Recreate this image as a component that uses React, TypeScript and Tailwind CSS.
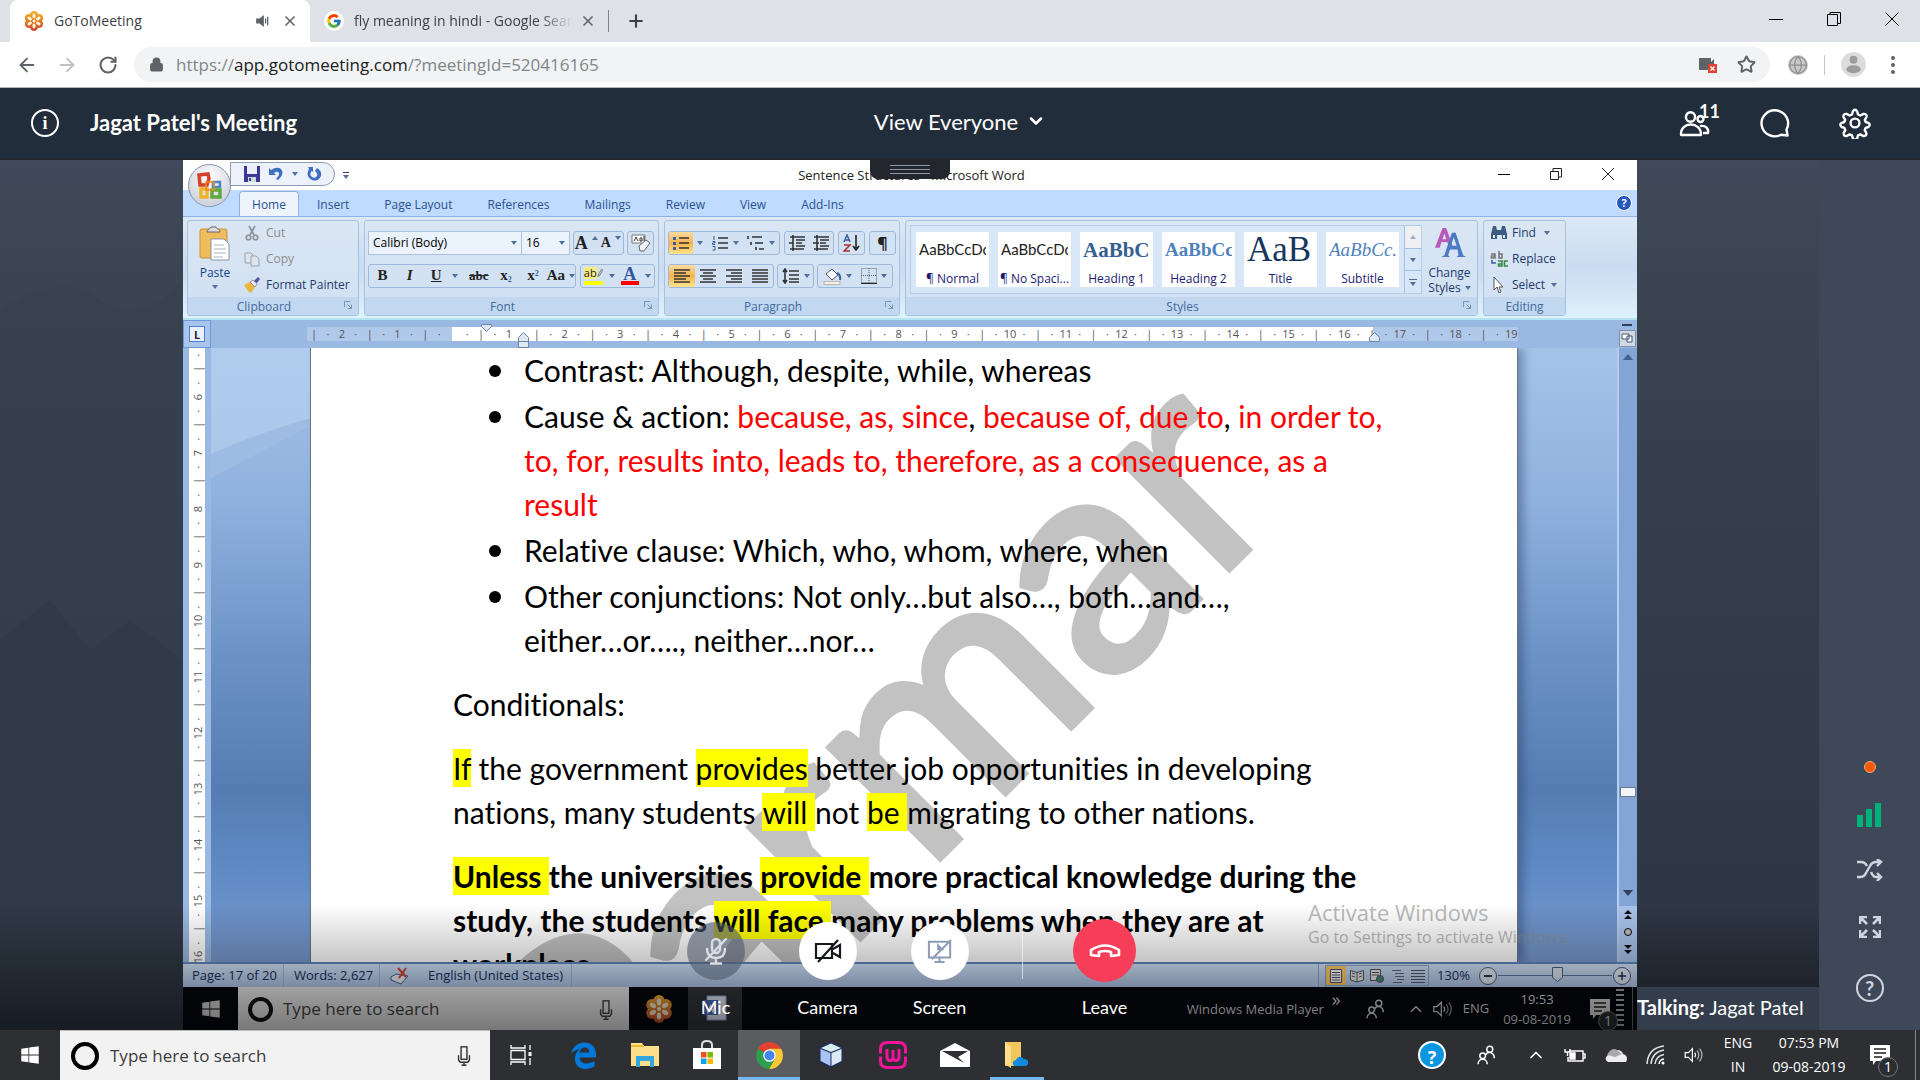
import React from "react";
import { ArrowLeft, ArrowRight, RotateCw, Lock, Star, X, Plus, ChevronDown, ChevronUp, Globe, Wifi } from "lucide-react";
import { FcGoogle } from "react-icons/fc";
import { FaWindows } from "react-icons/fa";

type Kids = { children?: React.ReactNode };

function Caret({ className = "" }: { className?: string }) {
  return (
    <svg viewBox="0 0 6 4" className={`h-1 w-1.5 shrink-0 ${className}`} aria-hidden="true">
      <path d="M0 0h6L3 4z" fill="#4f6f9f" />
    </svg>
  );
}

function Daisy({ className = "" }: { className?: string }) {
  const petals = [0, 60, 120, 180, 240, 300];
  return (
    <svg viewBox="0 0 24 24" className={className} aria-hidden="true">
      <defs>
        <linearGradient id="daisy" gradientUnits="userSpaceOnUse" x1="0" y1="0" x2="0" y2="24">
          <stop offset="0" stopColor="#f7b52c" />
          <stop offset="1" stopColor="#c8452f" />
        </linearGradient>
      </defs>
      <g fill="url(#daisy)">
        <circle cx="12" cy="5" r="5" />
        <circle cx="12" cy="19" r="5" />
        <circle cx="6" cy="8.500" r="5" />
        <circle cx="18" cy="8.500" r="5" />
        <circle cx="6" cy="15.500" r="5" />
        <circle cx="18" cy="15.500" r="5" />
        <circle cx="12" cy="12" r="7" />
      </g>
      <g fill="#fff3d6">
        {petals.map((a) => (
          <ellipse key={a} cx="12" cy="6" rx="1.900" ry="2.900" transform={`rotate(${a} 12 12)`} />
        ))}
        <circle cx="12" cy="12" r="1.800" />
      </g>
    </svg>
  );
}

function People({ className = "" }: { className?: string }) {
  return (
    <svg viewBox="0 0 24 24" className={className} fill="none" stroke="currentColor" strokeWidth="1.800" aria-hidden="true">
      <circle cx="16.500" cy="5" r="3.600" />
      <path d="M11.500 12c2-5 10.500-4 10.500 4" />
      <circle cx="8" cy="13" r="3.400" />
      <path d="M2.500 23c0-8 11-8 11 0" />
    </svg>
  );
}

function MicOutline({ className = "" }: { className?: string }) {
  return (
    <svg viewBox="0 0 16 24" className={className} fill="none" stroke="currentColor" strokeWidth="1.700" aria-hidden="true">
      <rect x="4.500" y="1" width="7" height="15" />
      <path d="M1.500 11v6l2 2.500h9l2-2.500v-6M8 19.500V23M5 23h6" />
    </svg>
  );
}

function Speaker({ className = "" }: { className?: string }) {
  return (
    <svg viewBox="0 0 24 20" className={className} fill="none" stroke="currentColor" strokeWidth="1.500" aria-hidden="true">
      <path d="M1 7h4l5-5v16l-5-5H1z" />
      <path d="M13 7q2 3 0 6" />
      <path d="M16 4.500q4 5.500 0 11M19 2q6 8 0 16" opacity=".65" />
    </svg>
  );
}

function Notice({ className = "" }: { className?: string }) {
  return (
    <span className={`relative block ${className}`}>
      <svg viewBox="0 0 20 20" className="h-5 w-5" aria-hidden="true">
        <path d="M0 0h20v16H6l-3 4v-4H0z" fill="currentColor" />
        <path d="M4 4h12M4 8h12M4 12h8" stroke="#222" strokeWidth="1.500" />
      </svg>
      <span className="absolute -right-2 -bottom-3 grid h-5 w-5 place-items-center rounded-full border border-[#777] bg-[#2b2d31] text-sm leading-none">1</span>
    </span>
  );
}

/* ---------- Browser ---------- */

function BrowserChrome() {
  return (
    <div className="shrink-0 bg-white">
      <div className="flex h-[42px] items-stretch bg-[#dee1e6] pl-2.5 text-sm text-[#3c4043]">
        <div className="flex w-[300px] items-center rounded-t-lg bg-white pr-3 pl-3.5">
          <Daisy className="h-5 w-5" />
          <span className="ml-2.5 flex-1">GoToMeeting</span>
          <svg viewBox="0 0 16 14" className="mr-3 h-3 w-3.5" aria-hidden="true">
            <path d="M0 4h4l5-4v14l-5-4H0z" fill="#5f6368" />
            <path d="M11 4v6M13.500 2v10" stroke="#5f6368" strokeWidth="1.500" />
          </svg>
          <button aria-label="Close tab"><X className="h-4 w-4 text-[#5f6368]" strokeWidth={2.500} /></button>
        </div>
        <div className="flex w-[298px] items-center pr-3 pl-3.5">
          <span className="grid h-5 w-5 shrink-0 place-items-center rounded-full bg-white"><FcGoogle className="h-4 w-4" /></span>
          <span className="ml-2.5 flex-1 overflow-hidden [mask-image:linear-gradient(to_right,black_85%,transparent)] whitespace-nowrap">fly meaning in hindi - Google Search</span>
          <button aria-label="Close tab" className="ml-2"><X className="h-4 w-4 text-[#5f6368]" strokeWidth={2.500} /></button>
        </div>
        <span className="my-2.5 w-px bg-[#80868b]" />
        <button aria-label="New tab" className="ml-[17px]"><Plus className="h-5 w-5 text-[#3c4043]" strokeWidth={2.500} /></button>
        <div className="ml-auto flex items-center gap-11 pr-[21px] pb-1 text-black">
          <button aria-label="Minimize"><span className="block h-px w-3.5 bg-black" /></button>
          <button aria-label="Restore">
            <svg viewBox="0 0 14 14" className="h-3.5 w-3.5" fill="none" stroke="#000"><path d="M.5 2.500h10v11H.5zM3 2.500V.5h10.500v11H11" /></svg>
          </button>
          <button aria-label="Close">
            <svg viewBox="0 0 14 14" className="h-3.5 w-3.5" stroke="#000"><path d="M.5.5l13 13M13.500.5l-13 13" /></svg>
          </button>
        </div>
      </div>
      <div className="flex h-[46px] items-center border-b border-[#b4b5b8] pl-4">
        <button aria-label="Back"><ArrowLeft className="h-[22px] w-[22px] text-[#5f6368]" /></button>
        <button aria-label="Forward" className="ml-[18px]"><ArrowRight className="h-[22px] w-[22px] text-[#bdc1c6]" /></button>
        <button aria-label="Reload" className="ml-5"><RotateCw className="h-5 w-5 text-[#5f6368]" strokeWidth={2.500} /></button>
        <div className="ml-4 flex h-[35px] flex-1 items-center rounded-full bg-[#f1f3f4] pr-3.5 pl-[15px]">
          <Lock className="h-[15px] w-[15px] text-[#5f6368]" fill="#5f6368" strokeWidth={2.500} />
          <span className="ml-3 flex-1 text-[17px] text-[#80868b]">
            https://<span className="text-[#202124]">app.gotomeeting.com</span>/?meetingId=520416165
          </span>
          <svg viewBox="0 0 18 16" className="mr-5 h-4 w-[18px]" aria-hidden="true">
            <path d="M0 1h12v4l3-3v5H9v6H0z" fill="#5f6368" />
            <path d="M9 7h9v9H9z" fill="#db4437" />
            <path d="M11.500 9.500l4 4M15.500 9.500l-4 4" stroke="#fff" strokeWidth="1.300" />
          </svg>
          <button aria-label="Bookmark this page"><Star className="h-[19px] w-[19px] text-[#5f6368]" strokeWidth={2.500} /></button>
        </div>
        <Globe className="ml-[18px] h-5 w-5 rounded-full bg-[#c9c9c9] text-[#8f8f8f]" strokeWidth={1.500} />
        <span className="ml-4 h-5 w-px bg-[#c4c6c9]" />
        <button aria-label="Profile" className="ml-4">
          <svg viewBox="0 0 24 24" className="h-[25px] w-[25px]"><circle cx="12" cy="12" r="12" fill="#dcdcdc" /><circle cx="12" cy="7.500" r="3.800" fill="#9c9c9c" /><ellipse cx="12" cy="16.500" rx="7" ry="3.800" fill="#9c9c9c" /></svg>
        </button>
        <button aria-label="Menu" className="mr-[25px] ml-[25px] flex flex-col gap-[3px]">
          <span className="h-1 w-1 rounded-full bg-[#5f6368]" />
          <span className="h-1 w-1 rounded-full bg-[#5f6368]" />
          <span className="h-1 w-1 rounded-full bg-[#5f6368]" />
        </button>
      </div>
    </div>
  );
}

function MeetingHeader() {
  return (
    <header className="grid h-[72px] shrink-0 grid-cols-[1fr_auto_1fr] items-center border-b-2 border-[#24262c] bg-[#222d3b] font-['Lato',sans-serif] text-white">
      <div className="flex items-center pl-[31px]">
        <button aria-label="Meeting info" className="grid h-7 w-7 place-items-center rounded-full border-2 border-white font-['Liberation_Serif',serif] text-lg leading-none font-bold">i</button>
        <h1 className="ml-[31px] pb-0.5 text-[22px] font-bold">Jagat Patel's Meeting</h1>
      </div>
      <button className="flex items-center gap-2 pb-1 text-[22px]">
        View Everyone <ChevronDown className="h-5 w-5" strokeWidth={3} />
      </button>
      <div className="flex items-center justify-end pr-[49px]">
        <button aria-label="Attendees" className="relative">
          <svg viewBox="0 0 32 30" className="h-[30px] w-8" fill="none" stroke="#fff" strokeWidth="2.400" strokeLinejoin="round">
            <ellipse cx="11.500" cy="9" rx="4.600" ry="4.800" />
            <path d="M2 27c-1-14 20.500-14 20 0z" />
            <circle cx="21.500" cy="11" r="3" />
            <path d="M21 18c6-1 9 3 8 7h-5" />
          </svg>
          <span className="absolute -top-1.5 left-5 text-lg leading-none font-bold">11</span>
        </button>
        <button aria-label="Chat" className="ml-12">
          <svg viewBox="0 0 32 30" className="h-[30px] w-8" fill="none" stroke="#fff" strokeWidth="2.400" strokeLinejoin="round">
            <path d="M27.500 21.500A13.300 13 0 1 0 22 26.800l6.500.7z" />
          </svg>
        </button>
        <button aria-label="Settings" className="ml-12">
          <svg viewBox="0 0 32 32" className="h-8 w-8" fill="none" stroke="#fff" strokeWidth="2.400" strokeLinejoin="round">
            <circle cx="16" cy="16" r="4.400" />
            <path d="M13.800 4.500q2.200-3.500 4.400 0l.8 3 2.400 1 3-1.600q3.600-.4 3.100 3.100l-1.700 2.800.9 2.200 2.600.8q2.800 1.700 0 4.200l-2.700.9-.9 2.300 1.600 2.700q.3 3.500-3.100 3.100l-2.800-1.600-2.400 1-.8 2.800q-2.200 3-4.400 0l-.8-2.800-2.400-1-2.800 1.600q-3.400.4-3.100-3.100l1.600-2.700-.9-2.300-2.700-.9q-2.800-2.500 0-4.200l2.600-.8.9-2.200-1.700-2.800q-.5-3.500 3.100-3.100l3 1.600 2.400-1z" />
          </svg>
        </button>
      </div>
    </header>
  );
}

/* ---------- Word ribbon ---------- */

function Group({ label, launcher = true, className = "", children }: Kids & { label: string; launcher?: boolean; className?: string }) {
  return (
    <section className={`flex flex-col overflow-hidden rounded-[3px] border border-[#a8c2de] bg-gradient-to-b from-[#dbe6f3] to-[#cfe0f3] ${className}`}>
      <div className="flex min-h-0 flex-1">{children}</div>
      <div className="flex h-[18px] shrink-0 items-center justify-center bg-[#c1d8f0] pt-0.5 text-[#44699f]">
        <span className="flex-1 text-center">{label}</span>
        {launcher && (
          <svg viewBox="0 0 9 9" className="mr-1.5 mb-1 ml-1 h-2 w-2 shrink-0" fill="none" stroke="#6b88ad" aria-hidden="true">
            <path d="M.5 7V.5H7M4 4l4 4M8.500 4v4.500H4" />
          </svg>
        )}
      </div>
    </section>
  );
}

function Box({ className = "", children }: Kids & { className?: string }) {
  return <div className={`flex h-6 items-stretch overflow-hidden rounded-[3px] border border-[#9db8dd] bg-[#d3e2f3] ${className}`}>{children}</div>;
}

function Tool({ label, on = false, className = "", children }: Kids & { label: string; on?: boolean; className?: string }) {
  return (
    <button aria-label={label} className={`flex flex-1 items-center justify-center gap-1 text-[#222] ${on ? "bg-gradient-to-b from-[#fbdc9e] via-[#f9b24c] to-[#fde48c]" : ""} ${className}`}>
      {children}
    </button>
  );
}

function Lines({ d, className = "w-[18px]" }: { d: string; className?: string }) {
  return (
    <svg viewBox="0 0 18 16" className={`h-4 ${className}`} fill="none" stroke="#333" strokeWidth="1.600" aria-hidden="true">
      <path d={d} />
    </svg>
  );
}

function Dots({ nums = false }: { nums?: boolean }) {
  return (
    <svg viewBox="0 0 18 16" className="h-4 w-[18px]" aria-hidden="true">
      <path d="M7 3h10M7 8h10M7 13h10" stroke="#333" strokeWidth="1.600" />
      {nums ? <path d="M3 1v4M1.500 6.500h2.500v1.500H1.500v1.500h2.500M1.500 11.500h2.500v3.500H1.500" stroke="#3a5f9f" fill="none" /> : <path d="M1 2h3v3H1zM1 7h3v3H1zM1 12h3v3H1z" fill="#3a5f9f" />}
    </svg>
  );
}

function ClipboardGroup() {
  return (
    <Group label="Clipboard" className="w-[172px]">
      <button className="flex w-[54px] flex-col items-center pt-1 text-[#15428b]">
        <svg viewBox="0 0 32 36" className="h-9 w-8" aria-hidden="true">
          <rect x="1" y="4" width="27" height="29" rx="2" fill="#f0bd5c" stroke="#c8913a" />
          <path d="M8 7c0-4 3-2 4-5h5c1 3 4 1 4 5z" fill="#ddd" stroke="#666" />
          <path d="M12 14h13l5 5v16H12z" fill="#fff" stroke="#8795ad" />
          <path d="M15 20h10M15 24h12M15 28h12M15 32h9" stroke="#a9b5c9" />
        </svg>
        <span className="mt-1">Paste</span>
        <Caret className="mt-1" />
      </button>
      <div className="flex flex-1 flex-col justify-between py-1 pl-0.5">
        <button className="flex items-center gap-1.5 text-[#8d8d8d]">
          <svg viewBox="0 0 16 16" className="h-4 w-4" fill="none" stroke="#8b8f97" strokeWidth="1.600"><path d="M5 1l5 9M11 1L6 10" /><circle cx="4.500" cy="12.500" r="2.300" /><circle cx="11.500" cy="12.500" r="2.300" /></svg>
          Cut
        </button>
        <button className="flex items-center gap-1.5 text-[#8d8d8d]">
          <svg viewBox="0 0 16 16" className="h-4 w-4" fill="#dfe3ea" stroke="#9aa3b3"><path d="M1 2h6l2 2v8H1z" /><path d="M7 5h5l3 3v7H7z" /></svg>
          Copy
        </button>
        <button className="flex items-center gap-1.5 whitespace-nowrap text-[#1e3a6c]">
          <svg viewBox="0 0 16 16" className="h-4 w-4" aria-hidden="true"><path d="M0 8l6-3 5 5-4 6-3-2z" fill="#e8b83c" /><path d="M6 5l3-2 4 4-2 3z" fill="#efe9f5" stroke="#7a6fae" strokeWidth=".7" /><path d="M10 4l4-4 2 2-3 4z" fill="#5c4d9e" /></svg>
          Format Painter
        </button>
      </div>
    </Group>
  );
}

function FontGroup() {
  return (
    <Group label="Font" className="w-[295px]">
      <div className="flex w-full flex-col gap-[9px] px-[3px] pt-2.5 font-['Liberation_Serif',serif] text-[15px] font-bold">
        <div className="flex gap-[3px]">
          <div className="flex font-['Open_Sans',sans-serif] text-xs font-normal">
            <button className="flex h-6 w-[154px] items-center justify-between border border-[#abc1de] bg-[#eaf2fb] px-1 text-black">Calibri (Body)<Caret /></button>
            <button className="flex h-6 w-[48px] items-center justify-between border border-l-0 border-[#abc1de] bg-[#eaf2fb] px-1 text-black">16<Caret /></button>
          </div>
          <Box className="w-[51px]">
            <Tool label="Grow font" className="gap-0 text-lg">A<Caret className="mt-1 rotate-180 self-start" /></Tool>
            <Tool label="Shrink font" className="gap-0 text-sm">A<Caret className="mt-1 self-start" /></Tool>
          </Box>
          <Box className="w-[27px]">
            <Tool label="Clear formatting">
              <svg viewBox="0 0 20 18" className="h-[18px] w-5" aria-hidden="true"><path d="M1 1h13v8H1z" fill="#fff" stroke="#777" /><path d="M3 7l2-4 2 4M9 4h2v3H9zM13 2v5" stroke="#333" fill="none" /><path d="M8 12l7-6 4 3-6 8H9z" fill="#f4f4f8" stroke="#666" /></svg>
            </Tool>
          </Box>
        </div>
        <div className="flex gap-1">
          <Box className="w-[208px]">
            <Tool label="Bold">B</Tool>
            <Tool label="Italic" className="italic">I</Tool>
            <Tool label="Underline" className="w-[42px] flex-none"><span className="underline">U</span><Caret className="ml-1.5" /></Tool>
            <Tool label="Strikethrough" className="text-[13px] line-through">abc</Tool>
            <Tool label="Subscript"><span>x<sub className="text-[8px] text-[#3a5f9f]">2</sub></span></Tool>
            <Tool label="Superscript"><span>x<sup className="text-[8px] text-[#3a5f9f]">2</sup></span></Tool>
            <Tool label="Change case" className="gap-0.5">Aa<Caret /></Tool>
          </Box>
          <Box className="w-[75px]">
            <Tool label="Highlight" className="gap-1.5"><span className="flex h-[18px] items-start border-b-4 border-[#ff0]"><span className="bg-[#f5ee7e] font-['Open_Sans',sans-serif] text-[11px] leading-3 font-normal">ab</span><svg viewBox="0 0 8 12" className="h-3 w-1.5"><path d="M1 11l1-4 4-6 2 1-4 7z" fill="#bbb" stroke="#555" strokeWidth=".7" /></svg></span><Caret /></Tool>
            <Tool label="Font color" className="gap-1.5"><span className="w-[18px] border-b-4 border-[#f00] text-lg leading-3.5 text-[#31579b]">A</span><Caret /></Tool>
          </Box>
        </div>
      </div>
    </Group>
  );
}

function ParagraphGroup() {
  return (
    <Group label="Paragraph" className="w-[236px]">
      <div className="flex w-full flex-col gap-[9px] px-[3px] pt-2.5">
        <div className="flex gap-1">
          <Box className="w-[112px]">
            <Tool label="Bullets" on className="w-6 flex-none"><Dots /></Tool>
            <Tool label="Bullet options" className="w-3.5 flex-none"><Caret /></Tool>
            <Tool label="Numbering"><Dots nums /><Caret /></Tool>
            <Tool label="Multilevel list" className="gap-0"><Lines d="M5 2h10M8 8h8M12 14h5M1 1v3M4 7v3M9 12v3" /><Caret /></Tool>
          </Box>
          <Box className="w-[50px]">
            <Tool label="Decrease indent"><Lines d="M2 2h15M8 5h9M8 8h6M8 11h9M2 14h14M5 0v16M1 8h4" /></Tool>
            <Tool label="Increase indent"><Lines d="M2 2h15M8 5h9M8 8h6M8 11h9M2 14h14M5 0v16M1 8h6" /></Tool>
          </Box>
          <Box className="w-[27px]">
            <Tool label="Sort">
              <svg viewBox="0 0 18 18" className="h-[18px] w-[18px]" fill="none" aria-hidden="true"><path d="M1 8l3-7 3 7M2 6h4" stroke="#3a5f9f" strokeWidth="1.500" /><path d="M1 11h6l-6 6h6" stroke="#a33" strokeWidth="1.500" /><path d="M13 1v14M10 12l3 4 3-4" stroke="#222" strokeWidth="1.600" /></svg>
            </Tool>
          </Box>
          <Box className="w-[27px]"><Tool label="Show marks" className="text-base font-bold">¶</Tool></Box>
        </div>
        <div className="flex gap-[3px]">
          <Box className="w-[106px]">
            <Tool label="Align left" on><Lines d="M1 2h16M1 5h12M1 8h16M1 11h12M1 14h16" /></Tool>
            <Tool label="Center"><Lines d="M1 2h16M4 5h10M1 8h16M4 11h10M1 14h16" /></Tool>
            <Tool label="Align right"><Lines d="M1 2h16M6 5h11M1 8h16M6 11h11M1 14h16" /></Tool>
            <Tool label="Justify"><Lines d="M1 2h16M1 5h16M1 8h16M1 11h16M1 14h16" /></Tool>
          </Box>
          <Box className="w-[37px]"><Tool label="Line spacing"><Lines d="M7 3h10M7 7h10M7 11h10M7 14h10M3 1v14M1 4l2-3 2 3M1 12l2 3 2-3" /><Caret /></Tool></Box>
          <Box className="w-[76px]">
            <Tool label="Shading"><svg viewBox="0 0 20 18" className="h-[18px] w-5"><path d="M4 7l6-5 6 6-6 5z" fill="#f5f7fb" stroke="#556" /><path d="M15 6q4 2 3 7" stroke="#3a5f9f" strokeWidth="2" fill="none" /><path d="M2 14.500h16v3H2z" fill="#f6efe2" stroke="#999" strokeWidth=".6" /></svg><Caret /></Tool>
            <Tool label="Borders"><svg viewBox="0 0 16 16" className="h-4 w-4" stroke="#566" strokeDasharray="1 1" fill="none"><path d="M.5.5h15v14H.5zM8 0v15M0 7.500h16" /><path d="M0 15.500h16" strokeDasharray="none" stroke="#222" /></svg><Caret /></Tool>
          </Box>
        </div>
      </div>
    </Group>
  );
}

const STYLES = [
  { name: "¶ Normal", demo: "AaBbCcDc", cls: "font-['Lato',sans-serif] text-[15px] text-[#222]" },
  { name: "¶ No Spaci...", demo: "AaBbCcDc", cls: "font-['Lato',sans-serif] text-[15px] text-[#222]" },
  { name: "Heading 1", demo: "AaBbCc", cls: "font-['Liberation_Serif',serif] font-bold text-[21px] text-[#366092]" },
  { name: "Heading 2", demo: "AaBbCc", cls: "font-['Liberation_Serif',serif] font-bold text-[19px] text-[#4f81bd]" },
  { name: "Title", demo: "AaB", cls: "font-['Liberation_Serif',serif] text-[35px] leading-8 text-[#17365d]" },
  { name: "Subtitle", demo: "AaBbCc.", cls: "font-['Liberation_Serif',serif] italic text-[19px] text-[#4f81bd]" },
];

function StylesGroup() {
  return (
    <Group label="Styles" className="w-[573px]">
      <div className="mt-1 ml-1 flex h-[69px] border border-[#b6cdea] bg-[#d8e7f8]">
        <div className="flex gap-[9px] px-[5px] py-1.5">
          {STYLES.map((s) => (
            <button key={s.name} className="flex w-[73px] flex-col items-center justify-between overflow-hidden bg-white">
              <span className={`flex h-9 w-[67px] items-center overflow-hidden whitespace-nowrap ${s.cls}`}>{s.demo}</span>
              <span className="text-xs whitespace-nowrap text-[#1c1a72]">{s.name}</span>
            </button>
          ))}
        </div>
        <div className="flex w-[17px] flex-col border-l border-[#a5bfe0]">
          <button aria-label="Previous styles" className="grid flex-1 place-items-center bg-[#eef0f3]"><Caret className="rotate-180 opacity-50" /></button>
          <button aria-label="Next styles" className="grid flex-1 place-items-center border-y border-[#a5bfe0]"><Caret /></button>
          <button aria-label="More styles" className="flex flex-1 flex-col items-center justify-center gap-0.5"><span className="h-px w-2 bg-[#4f6f9f]" /><Caret /></button>
        </div>
      </div>
      <button className="flex flex-1 flex-col items-center pt-1.5 leading-[15px] text-[#1e3a6c]">
        <svg viewBox="0 0 34 34" className="mb-1.5 h-8 w-[34px] shrink-0" aria-hidden="true">
          <path d="M1 22L9 1h4l7 20h-4l-2-5H8l-2 6zM9 13h4l-2-6z" fill="#b85cba" />
          <path d="M8 32l3-2 8-24h4l8 24 3 2H24l2-2-1-6h-8l-2 6 2 2zM18 20h6l-3-9z" fill="#4a7bc4" />
        </svg>
        Change
        <span className="flex items-center gap-1">Styles<Caret /></span>
      </button>
    </Group>
  );
}

function EditingGroup() {
  return (
    <Group label="Editing" launcher={false} className="w-[83px]">
      <div className="flex flex-1 flex-col justify-between py-1 pl-1.5 text-[#1e3a6c]">
        <button className="flex items-center gap-1">
          <svg viewBox="0 0 18 16" className="h-4 w-[18px]" aria-hidden="true"><path d="M3 1h3l1 4h4l1-4h3l2 8v5h-5v-4H7v4H1V9z" fill="#3d5a80" /><path d="M3 10h2v3H3zM13 10h2v3h-2z" fill="#dce7f5" /></svg>
          Find<Caret className="ml-1" />
        </button>
        <button className="flex items-center gap-1">
          <svg viewBox="0 0 18 16" className="h-4 w-[18px]" fill="none" strokeWidth="1.600" aria-hidden="true"><path d="M1 3h4v4H1.500V5H5M9 0v7h3V3H9" stroke="#777" /><path d="M2 9v3h4" stroke="#3a5f9f" /><path d="M8 10h4v5H8.500v-2H12M18 10h-3.500v5H18" stroke="#3a8a4a" /></svg>
          Replace
        </button>
        <button className="flex items-center gap-1">
          <svg viewBox="0 0 18 16" className="h-4 w-[18px]" aria-hidden="true"><path d="M4 0v13l3-3 2 6 2-1-2-5h4z" fill="#fff" stroke="#555" /></svg>
          Select<Caret className="ml-0.5" />
        </button>
      </div>
    </Group>
  );
}

const MENU = ["Insert", "Page Layout", "References", "Mailings", "Review", "View", "Add-Ins"];

function WordTop() {
  return (
    <div className="relative shrink-0">
      <div className="flex h-[30px] items-center bg-white pl-[47px]">
        <div className="mb-0.5 flex h-6 w-[105px] items-center gap-2 rounded-r-full border border-[#8e9cb3] bg-[#edf2fa] pl-[13px]">
          <svg viewBox="0 0 16 16" className="h-4 w-4"><path d="M0 0h16v16H0z" fill="#3d3a96" /><path d="M3 0h10v8H3z" fill="#eef" /><path d="M4 11h8v5H4z" fill="#cdd" /><path d="M5 12h2v3H5z" fill="#3d3a96" /></svg>
          <svg viewBox="0 0 16 16" className="h-4 w-4" aria-hidden="true"><path d="M1 2l2 2q6-4 10-1 4 5-3 11l-2-1q5-5 2-7-2-1-4 1l2 2H1z" fill="#3f6fc4" /></svg>
          <Caret />
          <svg viewBox="0 0 16 16" className="h-4 w-4" aria-hidden="true"><path d="M2 1h5v5L5.500 5Q3 9 6 11q3 2 5-1 1-3-2-5l2-3q5 3 4 8-3 6-9 4Q-1 10 3 3z" fill="#3f6fc4" /></svg>
        </div>
        <span className="ml-2 flex flex-col items-center gap-0.5"><span className="h-px w-1.5 bg-[#33415c]" /><Caret /></span>
        <div className="flex-1 pt-0.5 pr-6 text-center text-[13px] text-[#222]">Sentence Structures - Microsoft Word</div>
        <div className="flex items-center gap-10 pr-[23px] pb-0.5">
          <button aria-label="Minimize document"><span className="block h-px w-3 bg-black" /></button>
          <button aria-label="Restore document"><svg viewBox="0 0 12 12" className="h-3 w-3" fill="none" stroke="#222"><path d="M.5 3.500h8v8h-8zM3 3V.5h8.500V9H9" /></svg></button>
          <button aria-label="Close document"><svg viewBox="0 0 12 12" className="h-3 w-3" stroke="#222"><path d="M0 0l12 12M12 0L0 12" /></svg></button>
        </div>
      </div>
      <nav className="flex h-[27px] items-end gap-px border-b border-[#8db2e3] bg-[#bfdbff] pl-14 text-[#2b5190]">
        <button className="h-[25px] w-[60px] rounded-t border border-b-0 border-[#8db2e3] bg-[#edf4fc] pt-0.5">Home</button>
        {MENU.map((m) => (
          <button key={m} className="h-[25px] px-[17px] pt-0.5">{m}</button>
        ))}
        <button aria-label="Help" className="mr-[5px] mb-[5px] ml-auto grid h-4 w-4 place-items-center rounded-full border border-white bg-[#2757b8] text-[11px] font-bold text-white">?</button>
      </nav>
      <div className="flex h-[103px] gap-[5px] border-b-2 border-[#b5e4f5] bg-gradient-to-b from-[#dde8f5] via-[#c9dcf1] to-[#dff1fb] px-1 pt-[3px] pb-0.5 text-[#1e3a6c]">
        <ClipboardGroup />
        <FontGroup />
        <ParagraphGroup />
        <StylesGroup />
        <EditingGroup />
      </div>
      <button aria-label="Office" className="absolute top-1 left-[5px] grid h-[43px] w-[43px] place-items-center rounded-full border border-[#8693ad] bg-[radial-gradient(circle_at_50%_30%,#fff,#cfd3dd_75%,#eee)]">
        <svg viewBox="0 0 28 28" className="h-7 w-7" fill="none">
          <path d="M3 3l9-1 1 5-2 6H4z" stroke="#d5402b" strokeWidth="3.500" />
          <path d="M17 10h7v5h-7z" stroke="#4a87c9" strokeWidth="2.500" />
          <path d="M5 17h6v8H5z" stroke="#f0b429" strokeWidth="3.500" />
          <path d="M16 18h8v7h-8z" stroke="#5fa83c" strokeWidth="3.500" />
          <path d="M10 10h8v8h-8z" stroke="#f08a1d" strokeWidth="1.500" />
        </svg>
      </button>
      <div className="absolute top-0 left-[687px] flex h-[19px] w-20 flex-col items-center gap-[3px] rounded-b-lg bg-[#23262d] pt-[5px]">
        <span className="h-px w-10 bg-[#8a97ab]" />
        <span className="h-px w-10 bg-[#8a97ab]" />
        <span className="h-px w-10 bg-[#8a97ab]" />
      </div>
    </div>
  );
}

/* ---------- Document ---------- */

function mark(quarter: number) {
  if (quarter === 0) return "";
  if (quarter % 4 === 0) return String(Math.abs(quarter / 4));
  return quarter % 2 === 0 ? "|" : "·";
}

const H_MARKS = Array.from({ length: 87 }, (_, i) => mark(i - 10));
const V_MARKS = Array.from({ length: 45 }, (_, i) => mark(i + 21));

function Ruler() {
  return (
    <div className="flex h-7 shrink-0 bg-[#9ab9e2]">
      <div className="grid w-7 shrink-0 place-items-center border border-[#6f98d8] bg-[#a9c5ee]">
        <span className="grid h-4 w-4 place-items-center border border-[#4d7fd6] bg-[#eaf1fb] text-[11px] leading-none font-bold text-[#223]">L</span>
      </div>
      <div className="relative ml-[96px] flex-1">
        <div className="mt-[7px] flex h-3.5 overflow-hidden bg-[linear-gradient(to_right,#b0c8ea_12%,#fff_12%,#fff_88%,#b0c8ea_88%)] text-[11px] leading-3.5 text-[#555]">
          {H_MARKS.map((m, i) => (
            <span key={i} className="flex w-0 flex-1 justify-center">{m}</span>
          ))}
        </div>
        <svg viewBox="0 0 11 8" className="absolute top-1 left-[174px] h-2 w-[11px]"><path d="M.5.500h10v2L5.500 7.500l-5-5z" fill="#dfe7f3" stroke="#6d84a8" /></svg>
        <svg viewBox="0 0 11 16" className="absolute top-3 left-[211px] h-4 w-[11px]"><path d="M.5 15.500v-10l5-5 5 5v10zM.5 9.500h10" fill="#dfe7f3" stroke="#6d84a8" /></svg>
        <svg viewBox="0 0 11 10" className="absolute top-3 right-[138px] h-2.5 w-[11px]"><path d="M.5 9.500v-4l5-5 5 5v4z" fill="#dfe7f3" stroke="#6d84a8" /></svg>
      </div>
      <div className="ml-[99px] flex w-5 flex-col items-center gap-1 pt-1">
        <span className="h-0.5 w-2.5 bg-[#33415c]" />
        <svg viewBox="0 0 17 17" className="h-[17px] w-[17px]" aria-hidden="true">
          <path d="M.5.5h16v16H.5z" fill="#d3d9e3" stroke="#7f8fa8" />
          <path d="M3 4h7v5H3zM8 6h5v6H8z" fill="#fff" stroke="#3f5577" />
        </svg>
      </div>
    </div>
  );
}

const Hl = ({ children }: Kids) => <span className="bg-[#ff0] py-px">{children}</span>;
const Red = ({ children }: Kids) => <span className="text-[#f00]">{children}</span>;

function Bullet({ children }: Kids) {
  return (
    <li className="flex">
      <span className="w-[71px] shrink-0 pt-[17px] pl-9"><span className="block h-3 w-3 rounded-full bg-black" /></span>
      <div>{children}</div>
    </li>
  );
}

function PageText() {
  return (
    <div className="relative pl-[142px] font-['Lato',sans-serif] text-[30px] leading-[44px] whitespace-nowrap text-black">
      <ul className="flex flex-col gap-0.5">
        <Bullet>Contrast: Although, despite, while, whereas</Bullet>
        <Bullet>
          Cause &amp; action: <Red>because, as, since</Red>, <Red>because of, due to</Red>, <Red>in order to,<br />to, for, results into, leads to, therefore, as a consequence, as a<br />result</Red>
        </Bullet>
        <Bullet>Relative clause: Which, who, whom, where, when</Bullet>
        <Bullet>Other conjunctions: Not only…but also…, both…and…,<br />either…or…., neither…nor…</Bullet>
      </ul>
      <p className="mt-5">Conditionals:</p>
      <p className="mt-5">
        <Hl>If</Hl> the government <Hl>provides</Hl> better job opportunities in developing<br />
        nations, many students <Hl>will </Hl>not <Hl>be </Hl>migrating to other nations.
      </p>
      <p className="mt-5 font-bold">
        <Hl>Unless </Hl>the universities <Hl>provide </Hl>more practical knowledge during the<br />
        study, the students <Hl>will face </Hl>many problems when they are at<br />
        workplace.
      </p>
    </div>
  );
}

function DocumentArea() {
  return (
    <div className="relative flex min-h-0 flex-1 overflow-hidden bg-[linear-gradient(to_bottom,#a5c4ea,#8fb1de_25%,#6a90c4_52%,#557db3_72%,#5f8ac4_85%,#7a9bd0)]">
      <svg viewBox="0 0 100 130" className="absolute top-0 left-7 h-[130px] w-[100px]" aria-hidden="true">
        <path d="M0 0h100v78L0 130z" fill="#b9d2f0" opacity=".6" />
        <path d="M0 106q50-22 100-36v10L0 130z" fill="#94b4de" opacity=".6" />
      </svg>
      <div className="relative flex w-7 shrink-0 justify-center bg-[#9ab9e2]">
        <div className="flex w-4 flex-col items-center overflow-hidden bg-white text-[11px] leading-none text-[#555]">
          {V_MARKS.map((m, i) => (
            <span key={i} className="grid h-3.5 w-3.5 shrink-0 -rotate-90 place-items-center">{m}</span>
          ))}
        </div>
      </div>
      <div className="relative ml-[99px] flex-1 overflow-hidden border-x border-[#6b7480] bg-white shadow-[6px_0_8px_rgba(30,50,90,0.35)]">
        <div aria-hidden="true" className="absolute top-[260px] right-[166px] origin-center -rotate-45 font-['Lato',sans-serif] text-[310px] leading-none whitespace-nowrap text-[#c2c2c2] [-webkit-text-stroke:6px_#c2c2c2] [stroke-linejoin:round]">Parmar</div>
        <PageText />
      </div>
      <div className="ml-[99px] flex w-5 shrink-0 flex-col items-center border-l-2 border-[#b4cdf0] bg-[#83a5d5]">
        <svg viewBox="0 0 10 6" className="mt-1.5 h-1.5 w-2.5"><path d="M5 0l5 6H0z" fill="#44608f" /></svg>
        <span className="mt-[427px] h-2.5 w-4 border border-[#66799a] bg-[#f2f5fa]" />
        <svg viewBox="0 0 10 6" className="mt-auto h-1.5 w-2.5"><path d="M0 0h10L5 6z" fill="#33415c" /></svg>
        <div className="mt-2.5 flex w-full flex-col items-center gap-2 bg-[#a9c3ea] pt-1 pb-2">
          <svg viewBox="0 0 8 10" className="h-2.5 w-2"><path d="M4 0l4 4H0zM4 5l4 4H0z" fill="#111" /></svg>
          <span className="h-2 w-2 rounded-full border border-black bg-[#bbb]" />
          <svg viewBox="0 0 8 10" className="h-2.5 w-2"><path d="M4 5L0 1h8zM4 10L0 6h8z" fill="#111" /></svg>
        </div>
      </div>
      <div className="absolute right-[63px] bottom-3.5 w-[266px] whitespace-nowrap text-[#8b8b8b]/60">
        <div className="text-[22px] leading-7">Activate Windows</div>
        <div className="text-base leading-[22px]">Go to Settings to activate Windows.</div>
      </div>
    </div>
  );
}

function StatusBar() {
  return (
    <div className="flex h-[25px] shrink-0 items-center border-t-2 border-[#5f87c0] bg-gradient-to-b from-[#d4e4fa] to-[#b4cdf0] text-[13px] text-[#15305e]">
      <span className="flex h-full w-[101px] items-center border-r border-[#a0b8dc] pl-[9px]">Page: 17 of 20</span>
      <span className="flex h-full w-24 items-center border-r border-[#a0b8dc] pl-2.5">Words: 2,627</span>
      <span className="flex h-full items-center border-r border-[#a0b8dc] pr-2 pl-2.5">
        <svg viewBox="0 0 20 18" className="mr-[18px] h-[18px] w-5"><path d="M1 10l5-3 12 2-7 8-10-4z" fill="#eef2fb" stroke="#4a5f9a" /><path d="M8 1l8 9M16 1L9 11" stroke="#d0442f" strokeWidth="2" /></svg>
        English (United States)
      </span>
      <div className="ml-auto flex h-full items-center border-l border-[#8ba9d6] pl-1.5">
        <div className="flex h-[21px] border border-[#8aa8d4]">
          <button aria-label="Print layout" className="grid w-5 place-items-center bg-[#ffcf6b]"><svg viewBox="0 0 14 14" className="h-3.5 w-3.5" fill="#fff" stroke="#556"><path d="M1.500.5h11v13h-11zM3 3.500h8M3 6h8M3 8.500h8M3 11h8" /></svg></button>
          <button aria-label="Full screen reading" className="grid w-[21px] place-items-center"><svg viewBox="0 0 14 14" className="h-3.5 w-3.5" fill="#eee" stroke="#556"><path d="M.5 1.500l6.500 2 6.500-2v9.500l-6.500 2-6.500-2zM7 3v10M2 4l3 1M2 7l3 1M9 5l3-1M9 8l3-1" /></svg></button>
          <button aria-label="Web layout" className="grid w-5 place-items-center"><svg viewBox="0 0 14 14" className="h-3.5 w-3.5" fill="#eee" stroke="#556"><path d="M.5.5h10v11H.5zM2 3.500h7M2 6h7" /><circle cx="10" cy="10" r="3.500" fill="#4a8a7a" /></svg></button>
          <button aria-label="Outline" className="grid w-[21px] place-items-center"><svg viewBox="0 0 14 14" className="h-3.5 w-3.5" stroke="#667"><path d="M1 1.500h9M4 4.500h9M4 7.500h9M6 10.500h7M2 13.500h9" /></svg></button>
          <button aria-label="Draft" className="grid w-5 place-items-center"><svg viewBox="0 0 14 14" className="h-3.5 w-3.5" stroke="#556"><path d="M0 1.500h14M0 4.500h14M0 7.500h14M0 10.500h14M0 13.500h14" /></svg></button>
        </div>
        <span className="ml-2 w-[42px]">130%</span>
        <button aria-label="Zoom out" className="grid h-[18px] w-[18px] place-items-center rounded-full border border-[#4e5f7d] bg-[#e3ebf7]"><span className="h-0.5 w-2 bg-[#334]" /></button>
        <div className="relative mx-px h-px w-[114px] bg-[#5c79a8]">
          <svg viewBox="0 0 11 15" className="absolute -top-2 left-[54px] h-[15px] w-[11px]"><path d="M.5.5h10v10l-5 4-5-4z" fill="#dce6f4" stroke="#51617f" /></svg>
        </div>
        <button aria-label="Zoom in" className="mr-1.5 grid h-[18px] w-[18px] place-items-center rounded-full border border-[#4e5f7d] bg-[#e3ebf7]"><Plus className="h-3 w-3" strokeWidth={3} /></button>
      </div>
    </div>
  );
}

function RemoteTaskbar() {
  return (
    <div className="flex h-[43px] shrink-0 items-stretch bg-[#04070d] text-[#dcdcdc]">
      <button aria-label="Remote start" className="grid w-[55px] place-items-center"><FaWindows className="h-5 w-5" /></button>
      <div className="flex w-[391px] items-center bg-[#f0f0f0] px-2.5 pt-0.5 text-[#444]">
        <span className="h-[25px] w-[25px] rounded-full border-4 border-[#111]" />
        <span className="ml-2.5 flex-1 text-[17px]">Type here to search</span>
        <MicOutline className="mr-1.5 h-5 w-3.5" />
      </div>
      <span className="grid w-[59px] place-items-center"><Daisy className="h-7 w-7" /></span>
      <span className="grid w-[54px] place-items-center bg-[#33363c]">
        <svg viewBox="0 0 28 28" className="h-7 w-7"><path d="M6 1h19v24H6z" fill="#e8eefc" stroke="#8fa6e0" /><path d="M2 5h15v15H2z" fill="#4b6fc8" /><path d="M5 9l2 8 2.500-6 2.500 6 2-8" stroke="#fff" strokeWidth="1.600" fill="none" /></svg>
      </span>
      <div className="ml-auto flex items-center text-[13px]">
        <span className="pt-0.5 whitespace-nowrap">Windows Media Player</span>
        <span className="mb-5 ml-2 text-lg">»</span>
        <People className="ml-6 h-5 w-5" />
        <ChevronUp className="ml-[22px] h-[18px] w-[18px]" />
        <Speaker className="ml-2 h-[18px] w-5" />
        <span className="ml-2.5">ENG</span>
        <div className="ml-3.5 text-center leading-5">19:53<br />09-08-2019</div>
        <Notice className="ml-[19px]" />
        <span className="ml-1.5 h-10 w-2 bg-[repeating-linear-gradient(to_bottom,#aaa_0_2px,transparent_2px_5px)]" />
        <span className="mr-1 ml-2 h-full w-px bg-[#666]" />
      </div>
    </div>
  );
}

/* ---------- Meeting stage ---------- */

function Control({ label, className = "", children }: Kids & { label: string; className?: string }) {
  return (
    <button className="flex w-28 flex-col items-center text-white">
      <span className="grid h-[63px] place-items-center"><span className={`grid place-items-center rounded-full ${className}`}>{children}</span></span>
      <span className="mt-[11px] text-lg leading-7">{label}</span>
    </button>
  );
}

function Controls() {
  return (
    <div className="pointer-events-none absolute inset-x-0 bottom-0 flex h-[126px] items-start justify-center bg-gradient-to-b from-transparent to-black/50 pt-[15px] pl-px font-['Lato',sans-serif]">
      <Control label="Mic" className="h-[58px] w-[58px] bg-[#4c586c]/60">
        <svg viewBox="0 0 28 28" className="h-7 w-7" fill="none" stroke="#d8dce4" strokeWidth="2.400" strokeLinecap="round"><rect x="10" y="2" width="8" height="14" rx="4" /><path d="M5 12q0 9 9 9t9-9M14 21v5M9 26.500h10M24 2L4 23" /></svg>
      </Control>
      <Control label="Camera" className="h-[58px] w-[58px] bg-white">
        <svg viewBox="0 0 30 24" className="h-6 w-[30px]" fill="none" stroke="#15181d" strokeWidth="2.200"><path d="M3 5h16v14H3zM20 10l7-4v12l-7-4M25 1L5 23" /></svg>
      </Control>
      <Control label="Screen" className="h-[58px] w-[58px] bg-white">
        <svg viewBox="0 0 30 26" className="h-6 w-[30px]" fill="none" stroke="#8e9cb5" strokeWidth="2.200"><path d="M3 3h23v17H3zM14.500 20v4M9 25h11M27 1L6 22" /><path d="M13 7l4 4h-4z" fill="#8e9cb5" /></svg>
      </Control>
      <span className="mx-[26px] mt-[3px] h-[57px] w-px bg-white/60" />
      <Control label="Leave" className="h-[63px] w-[63px] bg-[#f63e59]">
        <svg viewBox="0 0 32 16" className="h-4 w-8" fill="none" stroke="#fff" strokeWidth="2.600" strokeLinejoin="round"><path d="M2 12V7q14-9 28 0v5l-8 1V9q-6-2-12 0v4z" /></svg>
      </Control>
    </div>
  );
}

function Stage() {
  return (
    <div className="flex min-h-0 flex-1">
      <main className="relative flex min-w-0 flex-1 bg-[linear-gradient(to_bottom,#404959,#39424f_20%,#323b49_55%,#2f3745_85%,#2b323e)]">
        <div className="relative w-[183px] shrink-0 overflow-hidden">
          <svg viewBox="0 0 183 870" preserveAspectRatio="none" className="h-full w-full" aria-hidden="true">
            <path d="M0 150q60-40 100-10t83-20v750H0z" fill="#36404e" opacity=".5" />
            <path d="M0 480l50-40 40 50 40-30 53 40v370H0z" fill="#2f3846" opacity=".6" />
          </svg>
        </div>
        <div className="flex min-w-0 flex-1 flex-col overflow-hidden text-xs">
          <WordTop />
          <Ruler />
          <DocumentArea />
          <StatusBar />
          <RemoteTaskbar />
        </div>
        <div className="flex w-[182px] shrink-0 flex-col justify-end" />
        <Controls />
        <div className="absolute right-0 bottom-0 flex h-[43px] w-[182px] items-center bg-[#333d4c] pb-1 font-['Lato',sans-serif] text-[20px] whitespace-nowrap text-white">
          <b>Talking:</b>&nbsp;Jagat Patel
        </div>
      </main>
      <aside className="flex w-[101px] shrink-0 flex-col items-center justify-end bg-[#3f4859] pb-7">
        <span className="h-3 w-3 rounded-full border border-[#f7a57c] bg-[#f25a05]" />
        <svg viewBox="0 0 25 24" className="mt-[30px] h-6 w-[25px]" fill="#00b27a" aria-label="Connection"><path d="M0 12h6v12H0zM9 6h6v18H9zM18 0h6v24h-6z" /></svg>
        <button aria-label="Switch layout" className="mt-8">
          <svg viewBox="0 0 26 22" className="h-[22px] w-[26px]" fill="none" stroke="#cfd5df" strokeWidth="2.400"><path d="M0 3h4q4 0 6 4M0 18h4q3 0 5-4l4-7q2-4 6-4h5M14 13q2 5 5 5h5M20 0l4 3-4 4M20 14l4 4-4 4" /></svg>
        </button>
        <button aria-label="Full screen" className="mt-[35px]">
          <svg viewBox="0 0 22 22" className="h-[22px] w-[22px]" fill="none" stroke="#cfd5df" strokeWidth="2.600"><path d="M1 8V1h7M1 1l7 7M14 1h7v7M21 1l-7 7M1 14v7h7M1 21l7-7M21 14v7h-7M21 21l-7-7" /></svg>
        </button>
        <button aria-label="Help" className="mt-9 grid h-7 w-7 place-items-center rounded-full border-2 border-[#cfd5df] font-['Lato',sans-serif] text-xl leading-none font-bold text-[#cfd5df]">?</button>
      </aside>
    </div>
  );
}

/* ---------- Local taskbar ---------- */

function Slot({ label, active = false, underline = false, children }: Kids & { label: string; active?: boolean; underline?: boolean }) {
  return (
    <button aria-label={label} className={`relative grid w-[62px] place-items-center ${active ? "bg-[#5b5c5f]" : ""}`}>
      {children}
      {underline && <span className={`absolute bottom-0 h-[3px] bg-[#76b9ed] ${active ? "inset-x-0" : "inset-x-1"}`} />}
    </button>
  );
}

function Taskbar() {
  return (
    <footer className="flex h-[50px] shrink-0 items-stretch bg-[#2d2f33] text-white">
      <button aria-label="Start" className="grid w-[60px] place-items-center"><FaWindows className="h-5 w-5" /></button>
      <label className="flex w-[430px] items-center border-t border-[#b9b9b9] bg-[#f2f2f2] px-[11px] text-[#333]">
        <span className="h-7 w-7 rounded-full border-4 border-black" />
        <input aria-label="Search" placeholder="Type here to search" className="ml-[11px] flex-1 bg-transparent text-[17px] outline-none placeholder:text-[#3c3c3c]" />
        <MicOutline className="mr-2 h-5 w-3.5" />
      </label>
      <Slot label="Task view">
        <svg viewBox="0 0 22 20" className="h-5 w-[22px]" fill="none" stroke="#fff" strokeWidth="1.300"><path d="M1 0v3h14V0M1 5.500h14v9H1zM1 20v-3h14v3M20 0v5M20 13v7" /><path d="M20 7v4" strokeWidth="3" /></svg>
      </Slot>
      <Slot label="Edge">
        <svg viewBox="0 0 26 28" className="h-[27px] w-[25px]" aria-hidden="true">
          <path d="M0 12.500C2 4 8 .5 14 .5c8 0 12 6 12 12V16H9c.3 8 10 7 15.500 4v5.500C14 31 4 27 4 17c0-4.500 2.500-8 5.500-9.500C5 8 2 10 0 12.500zM9 11h10c0-7-9-7-10 0z" fill="#0078d7" fillRule="evenodd" />
        </svg>
      </Slot>
      <Slot label="File Explorer">
        <svg viewBox="0 0 28 24" className="h-6 w-7"><path d="M0 0h11l2 3h15v20H0z" fill="#ffe08a" /><path d="M0 3h13" stroke="#eeb93b" strokeWidth="2" /><path d="M5 24V13h18v11h-4v-6H9v6z" fill="#34a7e0" /></svg>
      </Slot>
      <Slot label="Store">
        <svg viewBox="0 0 28 30" className="h-[30px] w-7"><path d="M9 9V5q0-4 5-4t5 4v4" fill="none" stroke="#ddd" strokeWidth="2" /><path d="M0 8h28v21H0z" fill="#fff" /><path d="M8 12h5.500v5.500H8z" fill="#f25022" /><path d="M14.500 12H20v5.500h-5.500z" fill="#7fba00" /><path d="M8 18.500h5.500V24H8z" fill="#00a4ef" /><path d="M14.500 18.500H20V24h-5.500z" fill="#ffb900" /></svg>
      </Slot>
      <Slot label="Chrome" active underline>
        <svg viewBox="0 0 28 28" className="h-[27px] w-[27px]"><path d="M14 14L1.900 7A14 14 0 0 1 26.100 7z" fill="#e2412f" /><path d="M14 14l12.100-7A14 14 0 0 1 14 28z" fill="#fcc934" /><path d="M14 14V28A14 14 0 0 1 1.900 7z" fill="#2f9e4f" /><path d="M14 7h12.100L20 17z" fill="#fcc934" /><path d="M8 17.500L14 28l6-10.500z" fill="#2f9e4f" /><path d="M20 17L14 28a14 14 0 0 0 8-2.500z" fill="#fcc934" /><circle cx="14" cy="14" r="6.500" fill="#fff" /><circle cx="14" cy="14" r="5.200" fill="#4285f4" /></svg>
      </Slot>
      <Slot label="VirtualBox">
        <svg viewBox="0 0 28 28" className="h-7 w-7"><path d="M14 1l12 5v15l-12 6L2 21V6z" fill="#1f2c5c" /><path d="M14 2.500l10 4.500-10 4L4 7z" fill="#d8eef0" /><path d="M3.500 8l10 4v13l-10-5z" fill="#a9c3f2" /><path d="M24.500 8l-10 4v13l10-5z" fill="#dbe8f6" /></svg>
      </Slot>
      <Slot label="Wamp">
        <svg viewBox="0 0 28 28" className="h-7 w-7" fill="none" stroke="#f0149a"><path d="M1.500 12.500V8q0-6.500 7-6.500h11q7 0 7 6.500v4.500M1.500 15.500V20q0 6.500 7 6.500h11q7 0 7-6.500v-4.500" strokeWidth="3" /><path d="M8 8v8q0 3.500 3 3.500t3-3.500V9v7q0 3.500 3 3.500t3-3.500V8" strokeWidth="3" /></svg>
      </Slot>
      <Slot label="Mail">
        <svg viewBox="0 0 30 24" className="h-6 w-[30px]"><path d="M0 8L15 0l15 8v16H0z" fill="#fff" /><path d="M2 8h26L18 14l6 6-11-6z" fill="#2d2f33" /></svg>
      </Slot>
      <Slot label="OneDrive folder" underline>
        <svg viewBox="0 0 26 28" className="h-7 w-[26px]"><path d="M1 1h16v24H1z" fill="#f3c55f" /><path d="M1 1l6 5v21l-6-4z" fill="#ffe08a" /><path d="M10 25q-3-5 2-6 3-6 8-1 5 0 4 5-1 2-3 2z" fill="#0f8be0" /></svg>
      </Slot>
      <div className="ml-auto flex items-center">
        <span className="grid h-7 w-7 place-items-center rounded-full border-2 border-white bg-[#0d96e0] text-lg font-bold">?</span>
        <People className="ml-[30px] h-5 w-5" />
        <ChevronUp className="ml-[30px] h-5 w-5" />
        <svg viewBox="0 0 22 14" className="ml-[18px] h-4 w-[22px]" fill="none" stroke="#fff" strokeWidth="1.400"><path d="M5 3h14v10H4V9M19 6h2v4h-2M1 1v3h5V1M3.500 4v4" /><path d="M6 5h5v6H6z" fill="#fff" /></svg>
        <svg viewBox="0 0 24 16" className="ml-[18px] h-4 w-6"><path d="M4 15q-5-3 0-7 3-7 9-5 5 0 6 4 6 2 3 8z" fill="#eee" /><path d="M3 8q4-8 10-5l5 4-7 3z" fill="#aaa" /></svg>
        <svg viewBox="0 0 20 20" className="ml-[18px] h-5 w-5" fill="none" stroke="#fff" strokeWidth="1.500" aria-hidden="true">
          <path d="M1 19Q2 3 18 1M5 19Q6 7 18 5M9 19q1-8 9-9.500" opacity=".85" />
          <path d="M13 19q.5-4.500 5-5" />
          <circle cx="17" cy="18" r="1.500" fill="#fff" stroke="none" />
        </svg>
        <Speaker className="ml-[18px] h-4 w-5" />
        <div className="ml-4 w-9 text-center text-sm leading-6">ENG<br />IN</div>
        <div className="ml-3 w-[82px] text-center text-sm leading-6 whitespace-nowrap">07:53 PM<br />09-08-2019</div>
        <Notice className="mr-[25px] ml-5" />
        <span className="mr-1 h-full w-px bg-[#888]" />
      </div>
    </footer>
  );
}

export default function App() {
  return (
    <div className="flex h-screen flex-col overflow-hidden bg-[#222d3b] font-['Open_Sans',sans-serif] [font-variant-ligatures:none]">
      <BrowserChrome />
      <MeetingHeader />
      <Stage />
      <Taskbar />
    </div>
  );
}
